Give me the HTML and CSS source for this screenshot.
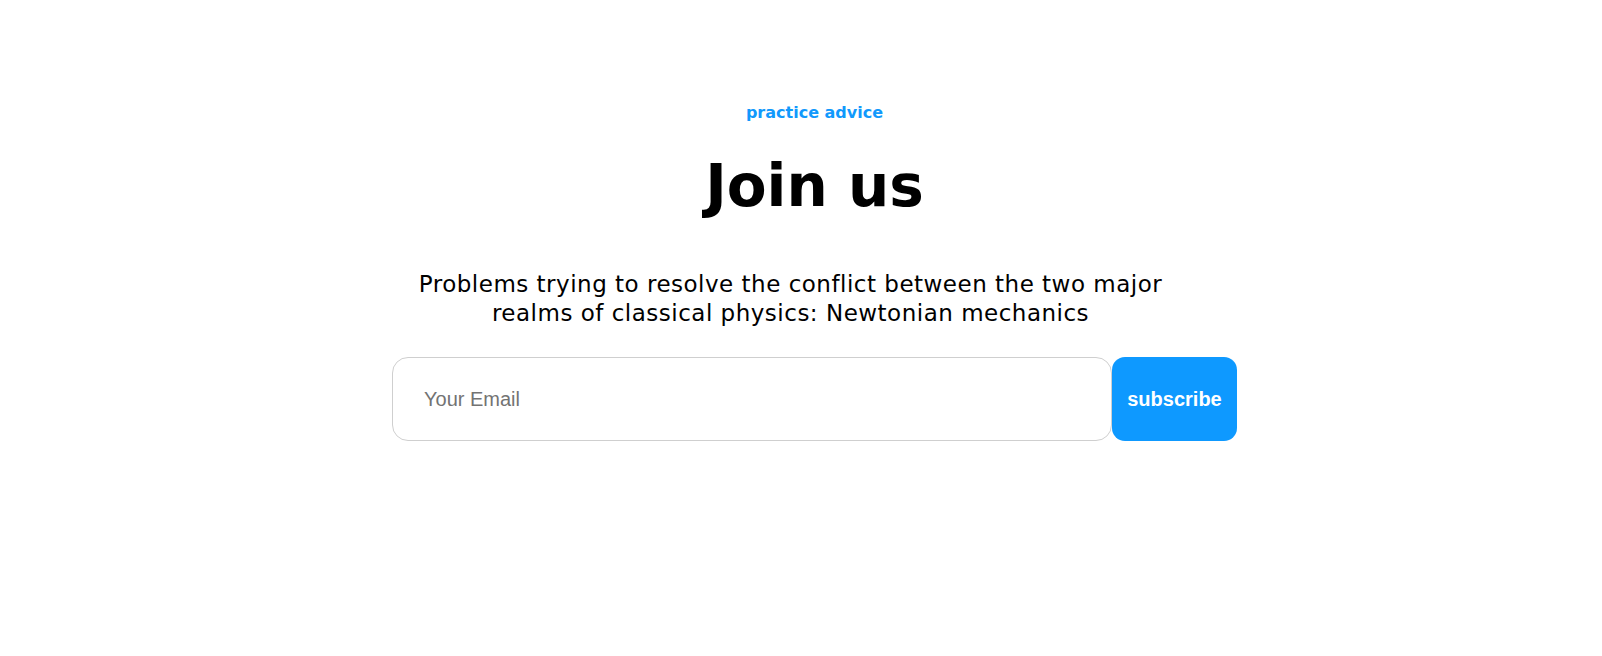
FILE: index.html
```html
<!DOCTYPE html>
<html lang="en">
<head>
<meta charset="utf-8">
<title>Join us</title>
<link rel="stylesheet" href="styles.css">
</head>
<body>
<section class="newsletter">
  <h5 class="eyebrow">practice advice</h5>
  <h2 class="title">Join us</h2>
  <p class="lead">Problems trying to resolve the conflict between the two major realms of classical physics: Newtonian mechanics</p>
  <form class="signup" onsubmit="return false">
    <input class="signup-input" type="email" placeholder="Your Email">
    <button class="signup-btn" type="submit">subscribe</button>
  </form>
</section>
</body>
</html>
```

FILE: styles.css
```css
* { box-sizing: border-box; }
html, body { margin: 0; padding: 0; background: #ffffff; }
body { font-family: "DejaVu Sans", "Noto Sans", sans-serif; color: #000; }

.newsletter {
  display: flex;
  flex-direction: column;
  align-items: center;
  padding: 101px 0 0 27px;
  height: 656px;
}

.eyebrow {
  margin: 0;
  font-size: 16px;
  line-height: 24px;
  font-weight: 700;
  color: #1199fc;
}

.title {
  margin: 21px 0 0;
  font-size: 58px;
  line-height: 80px;
  font-weight: 700;
  letter-spacing: 0;
}

.lead {
  margin: 44px 48px 0 0;
  width: 790px;
  text-align: center;
  font-size: 23px;
  line-height: 29px;
  letter-spacing: 0.5px;
  font-weight: 400;
}

.signup {
  margin: 29px 0 0;
  display: flex;
  width: 845px;
  height: 84px;
}

.signup-input {
  flex: 0 0 720px;
  height: 84px;
  border: 1px solid #cfcfcf;
  border-radius: 16px;
  padding: 0 0 0 31px;
  font-family: "Liberation Sans", Arial, sans-serif;
  font-size: 20px;
  color: #333;
  outline: none;
}
.signup-input::placeholder { color: #737373; }

.signup-btn {
  flex: 0 0 125px;
  height: 84px;
  border: none;
  border-radius: 13px;
  background: #0e99ff;
  color: #fff;
  font-family: "Liberation Sans", Arial, sans-serif;
  font-size: 20px;
  font-weight: 700;
  padding: 0;
  cursor: pointer;
}
```
